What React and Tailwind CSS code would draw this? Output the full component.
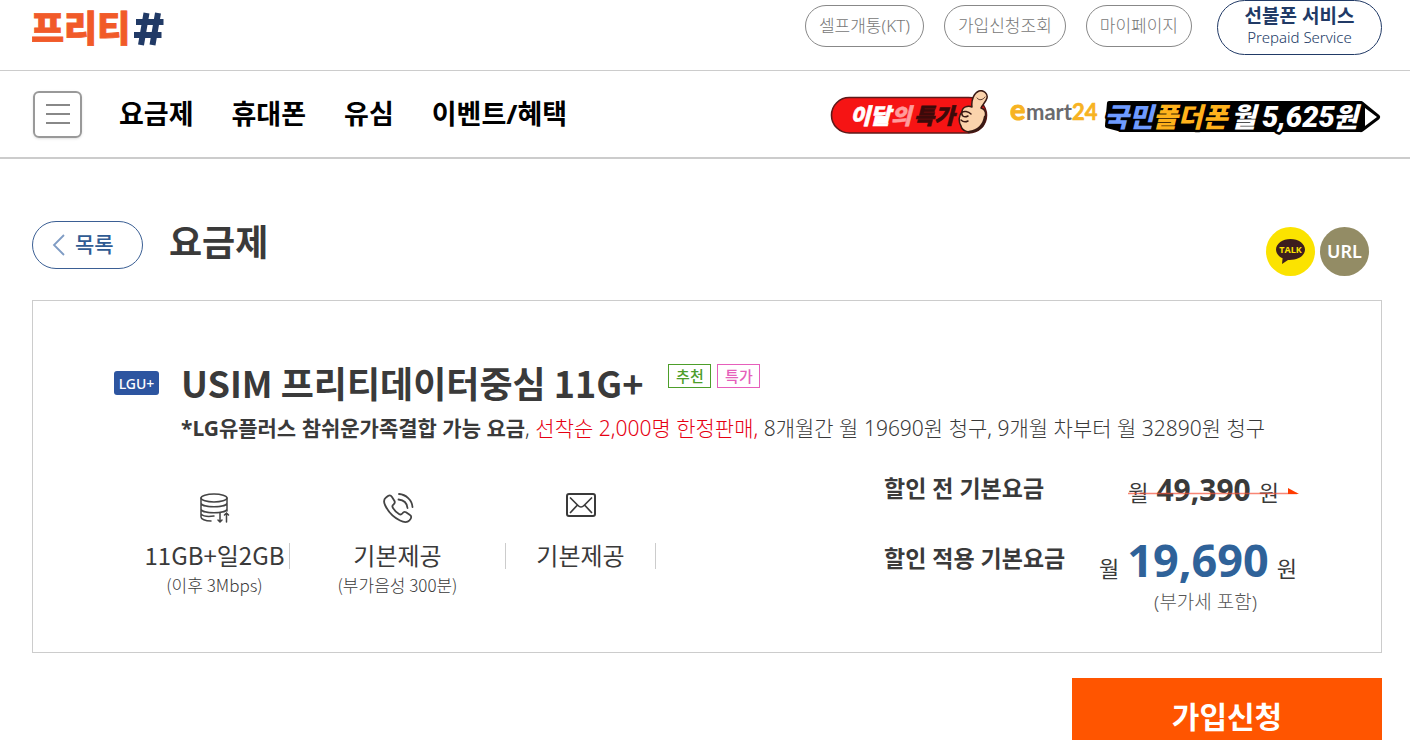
const quickLinks = ["셀프개통(KT)", "가입신청조회", "마이페이지"];
const menu = ["요금제", "휴대폰", "유심", "이벤트/혜택"];

function Logo() {
  return (
    <svg width="134" height="52" viewBox="0 0 134 52" role="img" aria-label="프리티#" className="text-[36px] font-black">
      <text x="-1" y="42" fill="#f15a29" stroke="#f15a29" strokeWidth="0.8">프리티</text>
      <g stroke="#213a66" strokeWidth="6">
        <path d="M114.5 13 109 45M126 13 120.500 45" />
        <path d="M104 22H131.500M102 35H129.500" />
      </g>
    </svg>
  );
}

function SpecialBanner() {
  return (
    <svg width="160" height="46" viewBox="0 0 160 46" role="img" aria-label="이달의 특가">
      <rect x="1.5" y="7.5" width="155" height="35.5" rx="17.75" fill="#f61414" stroke="#5e1a1a" strokeWidth="1.6" />
      <g className="text-[22px] font-black italic" strokeWidth="0.6">
        <text x="20" y="34" fill="#fff" stroke="#fff">이달</text>
        <text x="61" y="34" fill="#ff9c9c" stroke="#ff9c9c">의</text>
        <text x="84" y="34" fill="#3b0a0a" stroke="#3b0a0a">특가</text>
      </g>
      <g fill="#fbd3ac" stroke="#3a1a14" strokeWidth="1.5" strokeLinejoin="round" strokeLinecap="round">
        <path d="M142 17C141 10 144 3 149 1C154-.5 158 4 157 8C156 12 152 15 151 18C156 19 156 24 155 28C155 34 152 39 145 41C138 43 132 41 131 36C128 31 129 25 132 22C132 17 138 15 142 17Z" />
        <path d="M132 22C131 26 134 28 138 26M131 30C133 32 136 32 138 31M141 24C138 21 134 21 132 22" fill="none" />
        <path d="M147 8C149 11 153 10 155 7" fill="none" strokeWidth="0.8" />
        <path d="M155 27C154 35 148 41 139 42" fill="none" strokeWidth="2.5" />
      </g>
    </svg>
  );
}

function EmartBanner() {
  return (
    <svg width="372" height="46" viewBox="0 0 372 46" role="img" aria-label="emart24 국민폴더폰 월 5,625원">
      <g className="font-[Lato,sans-serif] font-bold">
        <text x="0" y="30" fontSize="29" fill="#f7b322" stroke="#f7b322" strokeWidth="1">e</text>
        <text x="16" y="30" fontSize="22" fill="#6a6a6d">mart</text>
        <text x="62" y="30" fontSize="22" fill="#f7b322" stroke="#f7b322" strokeWidth="0.6">24</text>
      </g>
      <path d="M351 14 367 27 351 39Z" fill="#000" stroke="#000" strokeWidth="6" strokeLinejoin="round" />
      <path d="M99 13H350V40H262L246 40H112L97 36Z" fill="#000" stroke="#000" strokeWidth="4" strokeLinejoin="round" />
      <g className="text-[27px] font-black italic" stroke="#000" strokeWidth="5" strokeLinejoin="round" paintOrder="stroke">
        <text x="94" y="37" fill="#6f9bff">국민</text>
        <text x="143" y="37" fill="#ffb21c">폴더폰</text>
        <text x="221" y="37" fill="#fff">월</text>
        <text x="252" y="37" className="font-[Roboto,sans-serif] text-[29px]" fill="#fff">5,625</text>
        <text x="323" y="37" fill="#fff">원</text>
      </g>
      <path d="M355 18 367 27 355 36Z" fill="#fff" />
    </svg>
  );
}

function DataIcon() {
  return (
    <svg width="30" height="30" viewBox="0 0 30 30" fill="none" stroke="#444" strokeWidth="1.5" strokeLinecap="round" aria-hidden="true">
      <ellipse cx="14" cy="5" rx="13" ry="4" />
      <path d="M1 5V24C1 26 5 28 11 28M27 5V18M1 10C1 15 27 15 27 10M1 16C1 21 27 21 27 16M1 21C3 23 8 24 14 23" />
      <path d="M20 20V29M18 27 20 29 22 27M26.500 29V20M24.500 22 26.500 20 28.500 22" />
    </svg>
  );
}

function CallIcon() {
  return (
    <svg width="32" height="30" viewBox="0 0 32 30" fill="none" stroke="#444" strokeWidth="1.800" strokeLinecap="round" strokeLinejoin="round" aria-hidden="true">
      <path d="M4 4.500 6 3C7.500 2 9 2.500 10 4L12.500 8C13.200 9.500 12.800 10.500 11.500 11.500C10 12.500 10 13.500 11 15C12.500 17.500 14.500 19.500 17 21C18.500 22 19.500 21.500 20.500 20.200C21.500 18.800 22.500 18.500 24 19.200L28 22C29.500 23 29.500 24.500 28.500 26L27.500 27.300C25.500 29.500 22 29.500 18 27.500C12 24.500 6 18.500 3 12C1.500 8.500 1.800 6 4 4.500Z" />
      <path d="M17 1C24 1.500 30 7 30.500 14M16.500 6.500C21.500 7 25 10 25.500 15" />
    </svg>
  );
}

function MailIcon() {
  return (
    <svg width="30" height="24" viewBox="0 0 30 24" fill="none" stroke="#3a3a3a" strokeWidth="2" strokeLinejoin="round" strokeLinecap="round" aria-hidden="true">
      <rect x="1" y="1" width="28" height="22" rx="2" />
      <path d="M4.500 5 12 12.500C14 14.500 16 14.500 18 12.500L25.500 5M4.500 19.500 11 12.500M25.500 19.500 19 12.500" strokeWidth="1.700" />
    </svg>
  );
}

function Feature({ icon, value, note, className }) {
  return (
    <li className={"flex flex-col items-center whitespace-nowrap font-['Noto_Sans_CJK_KR',sans-serif] " + className}>
      <div className="flex h-8 items-start">{icon}</div>
      <p className="mt-[14px] text-[24px] leading-8">{value}</p>
      {note && <p className="text-[17px] leading-7 font-light">{note}</p>}
    </li>
  );
}

const Divider = () => <li aria-hidden="true" className="mt-[50px] h-[26px] w-px bg-[#ccc]" />;

export default function App() {
  return (
    <div className="overflow-x-hidden bg-white font-['Noto_Sans','Noto_Sans_CJK_KR',sans-serif] text-[#3a3a3a]">
      <header>
        <div className="flex h-[71px] items-start justify-between border-b border-[#ccc] pr-7 pl-8">
          <a href="#home"><Logo /></a>
          <div className="flex items-start">
            <nav aria-label="바로가기" className="mt-[5px] mr-[25px] flex gap-5">
              {quickLinks.map((label) => (
                <a key={label} href="#quick" className="flex h-[42px] items-center rounded-full border border-[#888] px-[13px] text-[17px] font-light whitespace-nowrap text-[#777]">
                  {label}
                </a>
              ))}
            </nav>
            <a href="#prepaid" className="flex h-[55px] w-[165px] flex-col items-center rounded-full border border-[#213a66] pt-1 text-[#213a66]">
              <span className="text-[19px] leading-[22px] font-bold">선불폰 서비스</span>
              <span className="text-[15px] leading-5 font-light">Prepaid Service</span>
            </a>
          </div>
        </div>
        <div className="flex h-[88px] items-center justify-between border-b-2 border-[#ccc] pr-7 pl-[33px]">
          <div className="flex items-center">
            <button type="button" aria-label="전체메뉴" className="flex h-[47px] w-[49px] items-center justify-center rounded-md border-2 border-[#999] shadow-sm">
              <svg width="24" height="20" viewBox="0 0 24 20" stroke="#888" strokeWidth="2" aria-hidden="true">
                <path d="M0 1H24M0 10H24M0 19H24" />
              </svg>
            </button>
            <nav aria-label="주메뉴" className="ml-[37px] flex gap-[38px] text-[27px] font-bold text-black">
              {menu.map((label) => <a key={label} href="#menu">{label}</a>)}
            </nav>
          </div>
          <div className="mb-[2px] flex items-center gap-5">
            <a href="#special"><SpecialBanner /></a>
            <a href="#emart24"><EmartBanner /></a>
          </div>
        </div>
      </header>

      <main className="pr-7 pl-8">
        <div className="flex items-start justify-between pt-[62px]">
          <div className="flex items-start">
            <a href="#list" className="flex h-12 w-[111px] items-center rounded-full border border-[#3b5f94] pl-[19px] text-[21px] font-medium text-[#2f5b93]">
              <svg width="13" height="22" viewBox="0 0 13 22" fill="none" stroke="#7f9cc4" strokeWidth="1.800" className="mr-[10px]" aria-hidden="true">
                <path d="M12 1 2 11 12 21" />
              </svg>
              목록
            </a>
            <h1 className="ml-[26px] text-[36px] leading-[44px] font-bold">요금제</h1>
          </div>
          <div className="mt-[6px] mr-[13px] flex gap-[5px]">
            <button type="button" aria-label="카카오톡 공유" className="flex size-[49px] items-center justify-center rounded-full bg-[#fbe300]">
              <svg width="29" height="25" viewBox="0 0 29 25" aria-hidden="true">
                <path d="M14.500 0C6.500 0 0 4.700 0 10.500C0 14.200 2.600 17.500 6.600 19.300L6 25 12 20.900C22 21.500 29 16.500 29 10.500C29 4.700 22.500 0 14.500 0Z" fill="#3c1e1e" />
                <text x="14.500" y="14" textAnchor="middle" fontSize="9" fill="#fbe300" className="font-['Open_Sans',sans-serif] font-bold">TALK</text>
              </svg>
            </button>
            <button type="button" className="size-[49px] rounded-full bg-[#938c65] text-[18px] font-semibold text-white">URL</button>
          </div>
        </div>

        <section className="mt-6 min-h-[353px] border border-[#ccc] pr-20 pl-[81px]">
          <div className="flex pt-[58px]">
            <span className="mt-3 flex h-6 w-[45px] shrink-0 items-center justify-center rounded-[3px] bg-[#2d55a0] text-[14px] font-medium text-white">LGU+</span>
            <div className="ml-[22px]">
              <div className="flex items-start">
                <h2 className="font-['Noto_Sans_CJK_KR',sans-serif] text-[36px] leading-[46px] font-bold">USIM 프리티데이터중심 11G+</h2>
                <div className="mt-[5px] ml-[25px] flex gap-[6px] text-[15px] font-medium">
                  <span className="flex h-6 w-[43px] items-center justify-center border border-[#4d9e2a] text-[#4d9e2a]">추천</span>
                  <span className="flex h-6 w-[43px] items-center justify-center border border-[#e65fbb] text-[#e65fbb]">특가</span>
                </div>
              </div>
              <p className="mt-[8px] text-[21px] leading-[30px] font-light whitespace-nowrap">
                <strong className="font-bold">*LG유플러스 참쉬운가족결합 가능 요금</strong>, <span className="text-[#e60012]">선착순 2,000명 한정판매,</span> 8개월간 월 19690원 청구, 9개월 차부터 월 32890원 청구
              </p>
            </div>
          </div>

          <div className="flex items-start justify-between">
            <ul className="mt-[50px] ml-[26px] flex">
              <Feature icon={<DataIcon />} value="11GB+일2GB" note="(이후 3Mbps)" className="w-[149px]" />
              <Divider />
              <Feature icon={<CallIcon />} value="기본제공" note="(부가음성 300분)" className="w-[215px]" />
              <Divider />
              <Feature icon={<MailIcon />} value="기본제공" className="w-[149px]" />
              <Divider />
            </ul>
            <dl className="mt-[25px] w-[417px]">
              <div className="flex items-start justify-between pr-[22px]">
                <dt className="text-[23px] leading-10 font-bold">할인 전 기본요금</dt>
                <dd className="relative flex items-baseline gap-2 text-[22px] leading-[44px]">
                  <span>월</span>
                  <strong className="text-[30px]">49,390</strong>
                  <span>원</span>
                  <svg width="171" height="8" viewBox="0 0 171 8" className="absolute top-[19px] left-0" aria-hidden="true">
                    <path d="M0 6.500H169" stroke="#f5533a" strokeOpacity="0.7" strokeWidth="1.500" />
                    <path d="M160 1 171 7H160Z" fill="#ff3c00" />
                  </svg>
                </dd>
              </div>
              <div className="mt-6 flex items-start justify-between pr-1">
                <dt className="text-[23px] leading-10 font-bold">할인 적용 기본요금</dt>
                <dd className="flex flex-col items-end">
                  <p className="flex items-baseline gap-2 text-[22px] leading-[44px]">
                    <span>월</span>
                    <strong className="text-[45px] text-[#2f6299]">19,690</strong>
                    <span>원</span>
                  </p>
                  <p className="mr-10 text-[19px] leading-6 font-light text-[#555]">(부가세 포함)</p>
                </dd>
              </div>
            </dl>
          </div>
        </section>

        <div className="mt-[25px] flex justify-end">
          <button type="button" className="h-[76px] w-[310px] bg-[#ff5500] text-[30px] font-bold text-white">가입신청</button>
        </div>
      </main>
    </div>
  );
}
